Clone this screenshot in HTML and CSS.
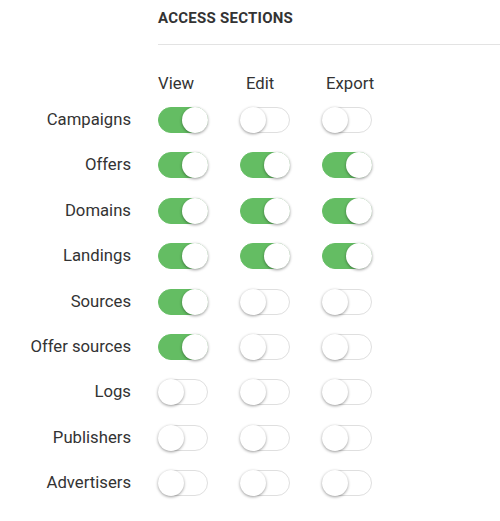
FILE: index.html
```html
<!DOCTYPE html>
<html>
<head>
<meta charset="utf-8">
<link rel="stylesheet" href="styles.css">
</head>
<body>
<div class="page">
  <div class="title-wrap"><h2 class="title">ACCESS SECTIONS</h2></div>
  <div class="grid">
    <div class="hd"></div>
    <div class="hd">View</div>
    <div class="hd hd-edit">Edit</div>
    <div class="hd hd-export">Export</div>

    <div class="label">Campaigns</div>
    <div class="cell"><span class="sw on"></span></div>
    <div class="cell"><span class="sw"></span></div>
    <div class="cell"><span class="sw"></span></div>

    <div class="label">Offers</div>
    <div class="cell"><span class="sw on"></span></div>
    <div class="cell"><span class="sw on"></span></div>
    <div class="cell"><span class="sw on"></span></div>

    <div class="label">Domains</div>
    <div class="cell"><span class="sw on"></span></div>
    <div class="cell"><span class="sw on"></span></div>
    <div class="cell"><span class="sw on"></span></div>

    <div class="label">Landings</div>
    <div class="cell"><span class="sw on"></span></div>
    <div class="cell"><span class="sw on"></span></div>
    <div class="cell"><span class="sw on"></span></div>

    <div class="label">Sources</div>
    <div class="cell"><span class="sw on"></span></div>
    <div class="cell"><span class="sw"></span></div>
    <div class="cell"><span class="sw"></span></div>

    <div class="label">Offer sources</div>
    <div class="cell"><span class="sw on"></span></div>
    <div class="cell"><span class="sw"></span></div>
    <div class="cell"><span class="sw"></span></div>

    <div class="label">Logs</div>
    <div class="cell"><span class="sw"></span></div>
    <div class="cell"><span class="sw"></span></div>
    <div class="cell"><span class="sw"></span></div>

    <div class="label">Publishers</div>
    <div class="cell"><span class="sw"></span></div>
    <div class="cell"><span class="sw"></span></div>
    <div class="cell"><span class="sw"></span></div>

    <div class="label">Advertisers</div>
    <div class="cell"><span class="sw"></span></div>
    <div class="cell"><span class="sw"></span></div>
    <div class="cell"><span class="sw"></span></div>
  </div>
</div>
</body>
</html>
```
FILE: styles.css
```css
html, body {
  margin: 0;
  padding: 0;
  background: #fff;
}
body {
  font-family: Roboto, "Liberation Sans", Arial, sans-serif;
  color: #333;
  width: 500px;
  height: 521px;
  overflow: hidden;
}
.page {
  width: 500px;
}
.title-wrap {
  margin-left: 158px;
  padding-top: 10px;
  padding-bottom: 17px;
  border-bottom: 1px solid #e3e3e3;
}
.title {
  margin: 0;
  font-size: 15px;
  line-height: 17px;
  font-weight: 700;
  letter-spacing: 0.25px;
  color: #333;
}
.grid {
  display: grid;
  grid-template-columns: 158px 82px 82px 82px;
  grid-template-rows: 52.3px repeat(9, 45.4px);
}
.label {
  padding-right: 27px;
}
.hd {
  align-self: end;
  font-size: 16.7px;
  line-height: 20px;
  padding-bottom: 3px;
  color: #333;
}
.hd-edit { padding-left: 6px; }
.hd-export { padding-left: 4px; }
.label {
  font-size: 16.7px;
  line-height: 20px;
  text-align: right;
  align-self: center;
  color: #333;
}
.cell {
  display: flex;
  align-items: center;
}
.sw {
  position: relative;
  display: inline-block;
  box-sizing: border-box;
  width: 50px;
  height: 26px;
  border-radius: 13px;
  border: 1px solid #dfdfdf;
  background: #fff;
}
.sw::after {
  content: "";
  position: absolute;
  top: -1px;
  left: -1px;
  width: 26px;
  height: 26px;
  border-radius: 50%;
  background: #fff;
  box-shadow: 0 1px 3px rgba(0, 0, 0, 0.4);
}
.sw.on {
  background: #64bd63;
  border-color: #64bd63;
}
.sw.on::after {
  left: 23px;
}
```
